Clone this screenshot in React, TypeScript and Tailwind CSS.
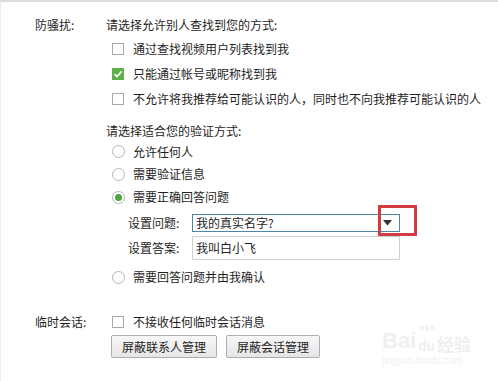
import React from "react";

const font = { fontFamily: '"Noto Sans CJK SC", "Noto Sans", sans-serif' };

function Check({ checked = false }: { checked?: boolean }) {
  if (checked) {
    return (
      <span className="flex h-[12px] w-[12px] items-center justify-center bg-[#5fb04a]">
        <svg width="10" height="10" viewBox="0 0 10 10">
          <path d="M1.5 5.2 L4 7.5 L8.6 2.4" stroke="#fff" strokeWidth="1.6" fill="none" />
        </svg>
      </span>
    );
  }
  return <span className="block h-[12px] w-[12px] border border-[#a9a9a9] bg-white" />;
}

function Radio({ checked = false }: { checked?: boolean }) {
  return (
    <span className="flex h-[13px] w-[13px] items-center justify-center rounded-full border border-[#b5b5b5] bg-white">
      {checked && <span className="block h-[7px] w-[7px] rounded-full bg-[#4fa83d]" />}
    </span>
  );
}

function OptRow({ h, children, ctrl }: { h: string; children: React.ReactNode; ctrl: React.ReactNode }) {
  return (
    <div className={`flex items-center pl-[111px] ${h}`}>
      <span className="flex w-[21px] items-center">{ctrl}</span>
      <span>{children}</span>
    </div>
  );
}

export default function App() {
  return (
    <div
      className="relative h-[381px] w-[498px] overflow-hidden border-t-2 border-l border-t-[#dcdcdc] border-l-[#ececec] bg-white text-[12px] leading-none text-[#1e1e1e]"
      style={font}
    >
      <div className="flex flex-col pt-[12px]">
        <div className="flex h-[22px] items-center">
          <span className="w-[105px] pl-[34px]">防骚扰:</span>
          <span>请选择允许别人查找到您的方式:</span>
        </div>
        <OptRow h="h-[25px]" ctrl={<Check />}>通过查找视频用户列表找到我</OptRow>
        <OptRow h="h-[25px]" ctrl={<Check checked />}>只能通过帐号或昵称找到我</OptRow>
        <OptRow h="h-[25px]" ctrl={<Check />}>不允许将我推荐给可能认识的人，同时也不向我推荐可能认识的人</OptRow>

        <div className="mt-[9px] flex h-[21px] items-center pl-[105px]">请选择适合您的验证方式:</div>
        <OptRow h="h-[21px]" ctrl={<Radio />}>允许任何人</OptRow>
        <OptRow h="h-[24px]" ctrl={<Radio />}>需要验证信息</OptRow>
        <OptRow h="h-[22px]" ctrl={<Radio checked />}>需要正确回答问题</OptRow>

        <div className="relative mt-[2px] flex h-[26px] items-center">
          <span className="w-[191px] pl-[127px]">设置问题:</span>
          <div className="flex h-[18px] w-[208px] items-center justify-between border border-[#4f86a8] bg-white pl-[3px] pr-[6px]">
            <span>我的真实名字?</span>
            <svg width="9" height="6" viewBox="0 0 9 6" className="mr-[1px]">
              <path d="M0 0 H9 L4.5 5.5 Z" fill="#333" />
            </svg>
          </div>
          <div className="absolute left-[377px] top-[-5px] h-[31px] w-[39px] border-[3px] border-[#d23b3f]" />
        </div>
        <div className="flex h-[24px] items-center">
          <span className="w-[191px] pl-[127px]">设置答案:</span>
          <div className="flex h-[24px] w-[208px] items-center border border-[#cfcfcf] bg-white pl-[3px]">
            <span>我叫白小飞</span>
          </div>
        </div>
        <OptRow h="mt-[6px] h-[22px]" ctrl={<Radio />}>需要回答问题并由我确认</OptRow>

        <div className="mt-[23px] flex h-[22px] items-center">
          <span className="w-[111px] pl-[34px]">临时会话:</span>
          <span className="flex w-[21px] items-center"><Check /></span>
          <span>不接收任何临时会话消息</span>
        </div>
        <div className="mt-[2px] flex gap-[9px] pl-[110px]">
          <button className="h-[23px] rounded-[2px] border border-[#adadad] bg-gradient-to-b from-[#f7f7f7] to-[#e6e6e6] px-[10px] text-[12px] text-[#1e1e1e]">
            屏蔽联系人管理
          </button>
          <button className="h-[23px] rounded-[2px] border border-[#adadad] bg-gradient-to-b from-[#f7f7f7] to-[#e6e6e6] px-[10px] text-[12px] text-[#1e1e1e]">
            屏蔽会话管理
          </button>
        </div>
      </div>

      <div className="pointer-events-none absolute left-[381px] top-[328px] flex flex-col items-start text-[#efefef]">
        <div className="flex items-end">
          <span className="text-[22px] font-bold leading-none" style={{ fontFamily: '"Liberation Sans", sans-serif' }}>Bai</span>
          <span className="relative ml-[2px] text-[13px] font-bold leading-none">
            <span className="absolute left-[2px] top-[-14px] flex gap-[1px]">
              <span className="block h-[5px] w-[4px] rounded-full bg-[#f2f2f2]" />
              <span className="block h-[6px] w-[4px] rounded-full bg-[#f2f2f2]" />
              <span className="block h-[5px] w-[4px] rounded-full bg-[#f2f2f2]" />
            </span>
            du
          </span>
          <span className="ml-[2px] text-[17px] font-bold leading-none">经验</span>
        </div>
        <span className="mt-[4px] text-[10px] leading-none" style={{ fontFamily: '"Liberation Sans", sans-serif' }}>jingyan.baidu.com</span>
      </div>
    </div>
  );
}
